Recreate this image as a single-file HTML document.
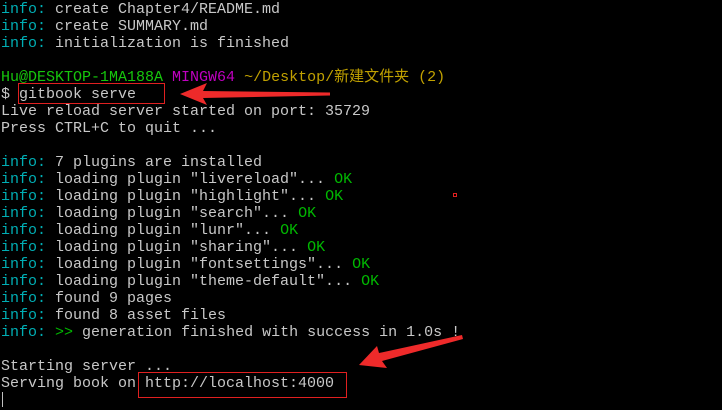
<!DOCTYPE html>
<html><head><meta charset="utf-8"><style>
html,body{margin:0;padding:0;background:#000;width:722px;height:410px;overflow:hidden}
pre{margin:0;padding:1px 0 0 1px;font-family:"Liberation Mono","Noto Sans CJK SC",monospace;font-size:15px;line-height:17px;color:#c8c8c8;white-space:pre}
.c{color:#00aeb4}.g{color:#00b800}.hu{color:#16c60c}.m{color:#c000c0}.y{color:#c1a100}
svg{position:absolute;left:0;top:0}
</style></head><body>
<pre><span class="c">info:</span> create Chapter4/README.md
<span class="c">info:</span> create SUMMARY.md
<span class="c">info:</span> initialization is finished

<span class="hu">Hu@DESKTOP-1MA188A</span> <span class="m">MINGW64</span> <span class="y">~/Desktop/新建文件夹 (2)</span>
$ gitbook serve
Live reload server started on port: 35729
Press CTRL+C to quit ...

<span class="c">info:</span> 7 plugins are installed
<span class="c">info:</span> loading plugin "livereload"... <span class="g">OK</span>
<span class="c">info:</span> loading plugin "highlight"... <span class="g">OK</span>
<span class="c">info:</span> loading plugin "search"... <span class="g">OK</span>
<span class="c">info:</span> loading plugin "lunr"... <span class="g">OK</span>
<span class="c">info:</span> loading plugin "sharing"... <span class="g">OK</span>
<span class="c">info:</span> loading plugin "fontsettings"... <span class="g">OK</span>
<span class="c">info:</span> loading plugin "theme-default"... <span class="g">OK</span>
<span class="c">info:</span> found 9 pages
<span class="c">info:</span> found 8 asset files
<span class="c">info:</span> <span class="g">&gt;&gt;</span> generation finished with success in 1.0s !

Starting server ...
Serving book on http://localhost:4000
</pre>
<svg width="722" height="410">
<rect x="18.5" y="83.5" width="146" height="20" fill="none" stroke="#e02020" stroke-width="1"/>
<rect x="138.5" y="372.5" width="208" height="25" fill="none" stroke="#e02020" stroke-width="1"/>
<rect x="453.5" y="193.5" width="3" height="3" fill="none" stroke="#e02020" stroke-width="1"/>
<path d="M180,94 L207,83 L203,91 L330,92.5 L330,95.5 L203,98 L207,105 Z" fill="#ee2a2a"/>
<path d="M359,365 L377,346 L379,353 L462,335 L463,339 L382,361 L387,368 Z" fill="#ee2a2a"/>
<rect x="2" y="392" width="1" height="15" fill="#c0c0c0"/>
</svg>
</body></html>
